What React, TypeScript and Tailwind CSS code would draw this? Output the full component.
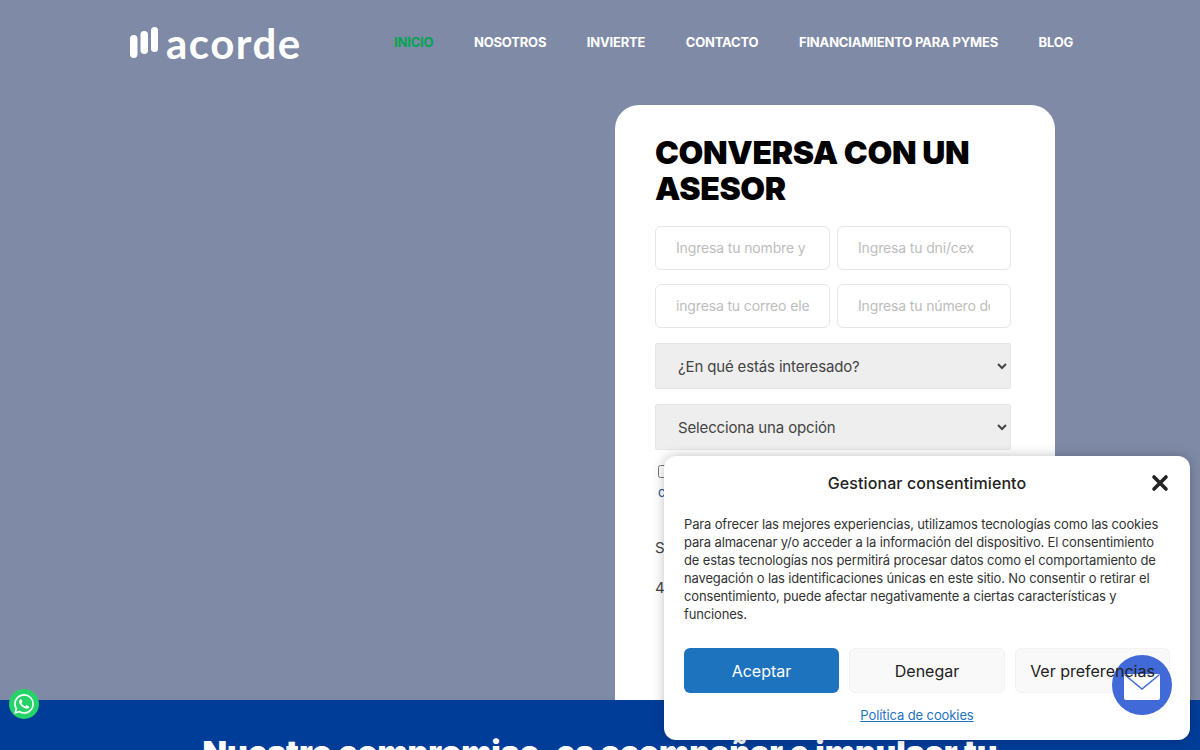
import React from "react";

const nav = ["NOSOTROS", "INVIERTE", "CONTACTO", "FINANCIAMIENTO PARA PYMES", "BLOG"];
const font = "font-['Inter','Noto_Sans',sans-serif]";

function Logo() {
  return (
    <div className="flex h-[34px] w-[170px] shrink-0 items-end">
      <svg width="28" height="32" viewBox="0 0 28 32" className="mb-px shrink-0">
        <rect x="0" y="8" width="7.500" height="23" rx="3.700" fill="#fff" />
        <rect x="10.500" y="4" width="7.500" height="23" rx="3.700" fill="#fff" />
        <rect x="21" y="0" width="7" height="25" rx="3.500" fill="#fff" />
      </svg>
      <span className="ml-[8px] font-['Lato',sans-serif] text-[42px] font-bold leading-[34px] tracking-[1.5px] text-white">acorde</span>
    </div>
  );
}

function Field({ placeholder, className }: { placeholder: string; className: string }) {
  return (
    <input
      placeholder={placeholder}
      className={`h-11 min-w-0 rounded-md border border-[#e6e6e6] bg-white px-5 pb-px text-sm tracking-[-0.15px] text-gray-600 outline-none placeholder:text-[#bdbdbd] ${className}`}
    />
  );
}

function Dropdown({ label }: { label: string }) {
  return (
    <select className="h-[46px] w-[356px] rounded-[2px] border border-[#e6e6e6] bg-[#eeeeee] pl-[18px] pr-1 text-[15px] tracking-[-0.15px] text-[#444]">
      <option>{label}</option>
    </select>
  );
}

export default function App() {
  return (
    <div className={`relative h-[750px] w-full overflow-hidden bg-[#7f8aa6] ${font}`}>
      <section className="h-[700px] overflow-hidden">
        <header className="flex h-[85px] items-center pl-[130px] pr-[100px] pt-[1px]">
          <Logo />
          <nav className="ml-[94px] flex gap-[40.5px] whitespace-nowrap text-[13px] font-bold tracking-[-0.18px] text-white">
            <a className="text-[#00a651]">INICIO</a>
            {nav.map((n) => (
              <a key={n}>{n}</a>
            ))}
          </nav>
        </header>
        <div className="ml-[615px] mt-5 h-[620px] w-[440px] rounded-t-[24px] bg-white pl-10 pt-[30px]">
          <h2 className="text-[32px] font-black leading-9 tracking-[-0.35px] text-black">CONVERSA CON UN ASESOR</h2>
          <div className="mt-[19px] flex w-[356px] flex-wrap gap-x-[7px] gap-y-[14px]">
            <Field placeholder="Ingresa tu nombre y apellido" className="w-[175px]" />
            <Field placeholder="Ingresa tu dni/cex" className="w-[174px]" />
            <Field placeholder="ingresa tu correo electrónico" className="w-[175px]" />
            <Field placeholder="Ingresa tu número de celular" className="w-[174px]" />
          </div>
          <div className="mt-[15px] flex flex-col gap-[15px]">
            <Dropdown label="¿En qué estás interesado?" />
            <Dropdown label="Selecciona una opción" />
          </div>
          <div className="mt-[14px] flex gap-1 pl-[3px] text-[13px] leading-[22px] text-[#1d4f9c]">
            <input type="checkbox" className="mt-[1px] h-[13px] w-[13px]" />
          </div>
          <p className="mt-[6px] pl-[3px] text-[13px] leading-4 text-[#1d4f9c]">c</p>
          <p className="mt-[38px] text-[15px] leading-5 text-[#444]">S</p>
          <p className="mt-5 text-[15px] leading-5 text-[#444]">4</p>
        </div>
      </section>

      <section className="h-[50px] bg-[#003d99] pt-[33px] text-center">
        <h2 className="text-[32px] font-black leading-10 text-white">Nuestro compromiso, es acompañar e impulsar tu</h2>
      </section>

      <div className="absolute bottom-[10px] left-[664px] h-[284px] w-[526px] rounded-xl bg-white px-5 shadow-[0_0_12px_rgba(0,0,0,0.25)]">
        <div className="relative flex h-[54px] items-center justify-center text-base font-medium tracking-[0.1px] text-[#222]">
          Gestionar consentimiento
          <svg width="18" height="18" viewBox="0 0 18 18" className="absolute right-[1px] top-[18px]">
            <path d="M3 3 L15 15 M15 3 L3 15" stroke="#222" strokeWidth="3.600" strokeLinecap="round" />
          </svg>
        </div>
        <p className="mt-[5px] text-[13px] leading-[18px] tracking-[-0.15px] text-[#333]">
          Para ofrecer las mejores experiencias, utilizamos tecnologías como las cookies para almacenar y/o acceder a la información del dispositivo. El consentimiento de estas tecnologías nos permitirá procesar datos como el comportamiento de navegación o las identificaciones únicas en este sitio. No consentir o retirar el consentimiento, puede afectar negativamente a ciertas características y funciones.
        </p>
        <div className="mt-[25px] flex gap-[10px]">
          <button className="h-[45px] w-[155px] rounded-md bg-[#1e73be] pt-px text-base text-white">Aceptar</button>
          <button className="h-[45px] w-[156px] rounded-md border border-[#f2f2f2] bg-[#f9f9f9] pt-px text-base text-[#222]">Denegar</button>
          <button className="h-[45px] w-[155px] rounded-md border border-[#f2f2f2] bg-[#f9f9f9] pt-px text-base text-[#222]">
            <span className="relative z-20">Ver preferencias</span>
          </button>
        </div>
        <div className="mt-[12px] pr-[20px] text-center text-[13px] leading-5 tracking-[-0.1px] text-[#1e73be] underline">Política de cookies</div>
      </div>

      <div className="absolute left-[1112px] top-[655px] z-10 flex h-[60px] w-[60px] items-center justify-center rounded-full bg-[#4169d8] pt-[4px]">
        <svg width="36" height="26" viewBox="0 0 36 26">
          <rect x="0" y="0" width="36" height="26" rx="2" fill="#fff" />
          <path d="M1 1 L18 15 L35 1" fill="none" stroke="#4169d8" strokeWidth="1.500" />
        </svg>
      </div>

      <div className="absolute left-[9px] top-[689px] flex h-[30px] w-[30px] items-center justify-center rounded-full bg-[#25d366]">
        <svg width="20" height="20" viewBox="0 0 24 24" fill="#fff">
          <path d="M17.472 14.382c-.297-.149-1.758-.867-2.03-.967-.273-.099-.471-.148-.67.15-.197.297-.767.966-.94 1.164-.173.199-.347.223-.644.075-.297-.15-1.255-.463-2.39-1.475-.883-.788-1.48-1.761-1.653-2.059-.173-.297-.018-.458.13-.606.134-.133.298-.347.446-.52.149-.174.198-.298.298-.497.099-.198.05-.371-.025-.52-.075-.149-.669-1.612-.916-2.207-.242-.579-.487-.5-.669-.51-.173-.008-.371-.01-.57-.01-.198 0-.52.074-.792.372-.272.297-1.04 1.016-1.04 2.479 0 1.462 1.065 2.875 1.213 3.074.149.198 2.096 3.2 5.077 4.487.709.306 1.262.489 1.694.625.712.227 1.36.195 1.871.118.571-.085 1.758-.719 2.006-1.413.248-.694.248-1.289.173-1.413-.074-.124-.272-.198-.57-.347m-5.421 7.403h-.004a9.87 9.87 0 01-5.031-1.378l-.361-.214-3.741.982.998-3.648-.235-.374a9.86 9.86 0 01-1.51-5.26c.001-5.45 4.436-9.884 9.888-9.884 2.64 0 5.122 1.03 6.988 2.898a9.825 9.825 0 012.893 6.994c-.003 5.45-4.437 9.884-9.885 9.884m8.413-18.297A11.815 11.815 0 0012.05 0C5.495 0 .16 5.335.157 11.892c0 2.096.547 4.142 1.588 5.945L.057 24l6.305-1.654a11.882 11.882 0 005.683 1.448h.005c6.554 0 11.89-5.335 11.893-11.893a11.821 11.821 0 00-3.48-8.413z" />
        </svg>
      </div>
    </div>
  );
}
